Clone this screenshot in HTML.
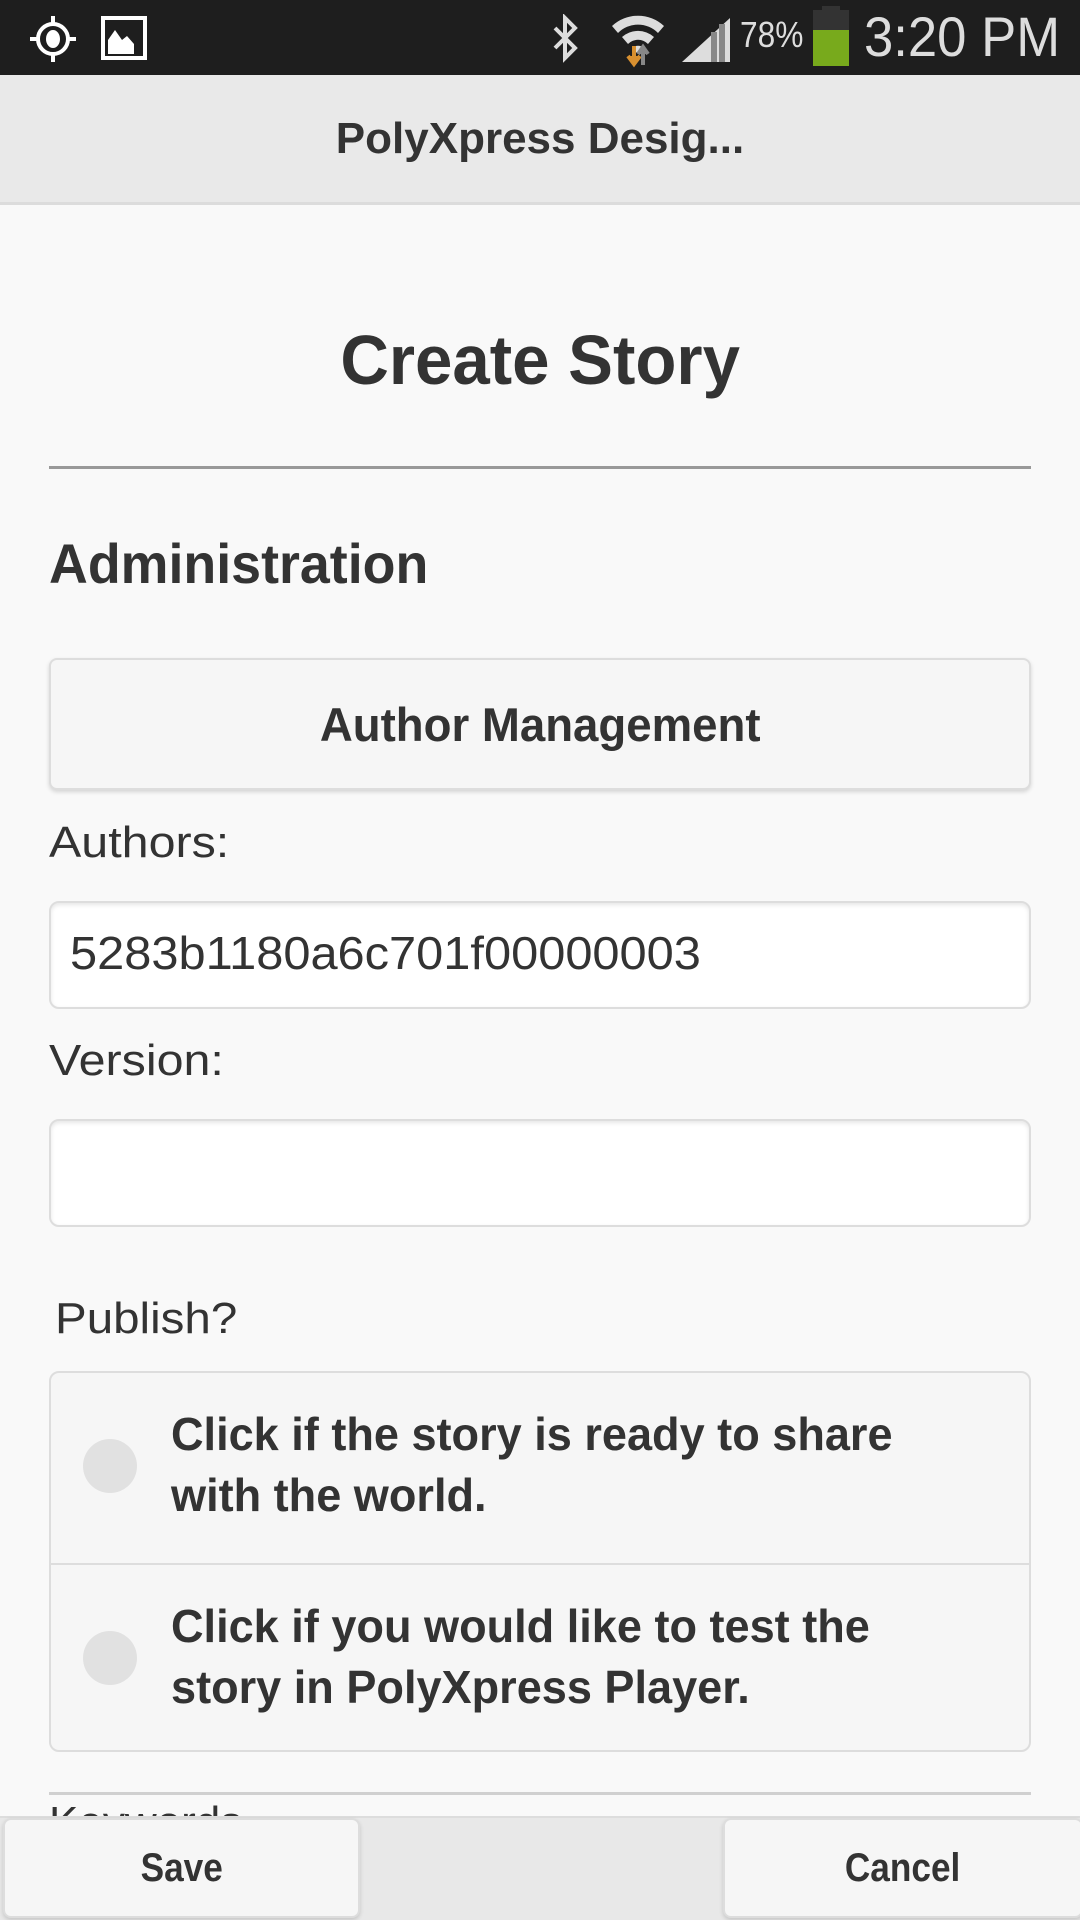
<!DOCTYPE html>
<html><head><meta charset="utf-8"><style>
*{box-sizing:border-box;margin:0;padding:0}
body{width:1080px;height:1920px;overflow:hidden;background:#f9f9f9;font-family:"Liberation Sans",sans-serif;color:#333;position:relative}
.abs{position:absolute}
.sb{left:0;top:0;width:1080px;height:75px;background:#1e1e1e}
.hdr{left:0;top:75px;width:1080px;height:130px;background:#e9e9e9;border-bottom:3px solid #dcdcdc}
.c{display:flex;align-items:center;justify-content:center}
.sq{transform:scaleX(.88);display:inline-block;white-space:nowrap}
.btn{background:#f6f6f6;border:2px solid #ddd;border-radius:8px;box-shadow:0 2px 4px rgba(0,0,0,.15)}
.inp{background:#fff;border:2px solid #ddd;border-radius:10px;box-shadow:inset 0 2px 4px rgba(0,0,0,.1)}
.lbl{font-size:44px;color:#333}
.lbl .sq{transform:scaleX(1.1);transform-origin:left}
.rt{font-size:46px;font-weight:bold;line-height:61px;color:#333}
.radio{width:54px;height:54px;border-radius:50%;background:#e1e1e1}
</style></head><body>
<div class="abs sb">
<svg class="abs" style="left:28px;top:14px" width="50" height="50" viewBox="0 0 50 50"><circle cx="25" cy="25" r="15" fill="none" stroke="#fff" stroke-width="4"/><ellipse cx="25" cy="25" rx="7" ry="9" fill="#fff"/><path d="M25 2v8M25 40v8M2 25h8M40 25h8" stroke="#fff" stroke-width="4"/></svg>
<svg class="abs" style="left:101px;top:16px" width="48" height="46" viewBox="0 0 48 46"><rect x="2" y="2" width="42" height="40" fill="none" stroke="#fff" stroke-width="4"/><path d="M7 38V24l7-10 7 10 5-4 7 8v10z" fill="#fff"/></svg>
<svg class="abs" style="left:545px;top:14px" width="40" height="50" viewBox="0 0 40 50"><path d="M10 14l20 20-10 10V4l10 10-20 20" fill="none" stroke="#ddd" stroke-width="4"/></svg>
<svg class="abs" style="left:608px;top:10px" width="60" height="60" viewBox="0 0 60 60"><path d="M4 16a38 38 0 0 1 52 0l-6 7a28 28 0 0 0-40 0zM14 27a24 24 0 0 1 32 0l-6 7a14 14 0 0 0-20 0zM24 38a9 9 0 0 1 12 0l-6 6z" fill="#ddd"/><path d="M26 36v16M20 46l6 8 6-8" stroke="#d89030" stroke-width="4" fill="#d89030"/><path d="M35 55V40M30 44l5-7 5 7" stroke="#888" stroke-width="4" fill="#888"/></svg>
<svg class="abs" style="left:680px;top:16px" width="54" height="48" viewBox="0 0 54 48"><path d="M2 46L50 2v44z" fill="#ddd"/><path d="M34 16v30M42 8v38" stroke="#888" stroke-width="6"/></svg>
<div class="abs" style="left:740px;top:14px;font-size:36px;color:#ddd"><span class="sq" style="transform-origin:left">78%</span></div>
<div class="abs" style="left:813px;top:10px;width:36px;height:56px;background:#333"></div>
<div class="abs" style="left:822px;top:6px;width:18px;height:8px;background:#333"></div>
<div class="abs" style="left:813px;top:30px;width:36px;height:36px;background:#78aa1c"></div>
<div class="abs" style="left:864px;top:4px;font-size:56px;color:#ddd"><span class="sq" style="transform-origin:left;transform:scaleX(.94)">3:20 PM</span></div>
</div>
<div class="abs hdr c"><span class="sq" style="font-size:44px;font-weight:bold;color:#333;transform:none">PolyXpress Desig...</span></div>
<div class="abs c" style="left:0;top:320px;width:1080px;height:80px"><span class="sq" style="font-size:70px;font-weight:bold;transform:scaleX(.96)">Create Story</span></div>
<div class="abs" style="left:49px;top:466px;width:982px;height:3px;background:#999"></div>
<div class="abs" style="left:49px;top:530px;font-size:56px;font-weight:bold;line-height:68px"><span class="sq" style="transform-origin:left;transform:scaleX(.96)">Administration</span></div>
<div class="abs btn c" style="left:49px;top:658px;width:982px;height:132px"><span class="sq" style="font-size:47px;font-weight:bold;transform:scaleX(.97)">Author Management</span></div>
<div class="abs lbl" style="left:49px;top:818px"><span class="sq">Authors:</span></div>
<div class="abs inp" style="left:49px;top:901px;width:982px;height:108px"></div>
<div class="abs" style="left:70px;top:926px;font-size:46px;color:#333"><span class="sq" style="transform-origin:left;transform:scaleX(1.06)">5283b1180a6c701f00000003</span></div>
<div class="abs lbl" style="left:49px;top:1036px"><span class="sq">Version:</span></div>
<div class="abs inp" style="left:49px;top:1119px;width:982px;height:108px"></div>
<div class="abs lbl" style="left:55px;top:1294px"><span class="sq" style="transform:scaleX(1.08)">Publish?</span></div>
<div class="abs" style="left:49px;top:1371px;width:982px;height:381px;border:2px solid #ddd;border-radius:10px;background:#f6f6f6"></div>
<div class="abs" style="left:50px;top:1563px;width:980px;height:2px;background:#ddd"></div>
<div class="abs radio" style="left:83px;top:1439px"></div>
<div class="abs radio" style="left:83px;top:1631px"></div>
<div class="abs rt" style="left:171px;top:1404px"><span class="sq" style="transform-origin:left;transform:scaleX(.98)">Click if the story is ready to share<br>with the world.</span></div>
<div class="abs rt" style="left:171px;top:1596px"><span class="sq" style="transform-origin:left;transform:scaleX(.98)">Click if you would like to test the<br>story in PolyXpress Player.</span></div>
<div class="abs" style="left:49px;top:1792px;width:982px;height:3px;background:#d0d0d0"></div>
<div class="abs lbl" style="left:49px;top:1798px">Keywords</div>
<div class="abs" style="left:0;top:1816px;width:1080px;height:104px;background:#e8e8e8;border-top:2px solid #ddd"></div>
<div class="abs btn c" style="left:3px;top:1818px;width:357px;height:100px"><span class="sq" style="font-size:40px;font-weight:bold">Save</span></div>
<div class="abs btn c" style="left:723px;top:1818px;width:360px;height:100px"><span class="sq" style="font-size:40px;font-weight:bold">Cancel</span></div>
</body></html>
